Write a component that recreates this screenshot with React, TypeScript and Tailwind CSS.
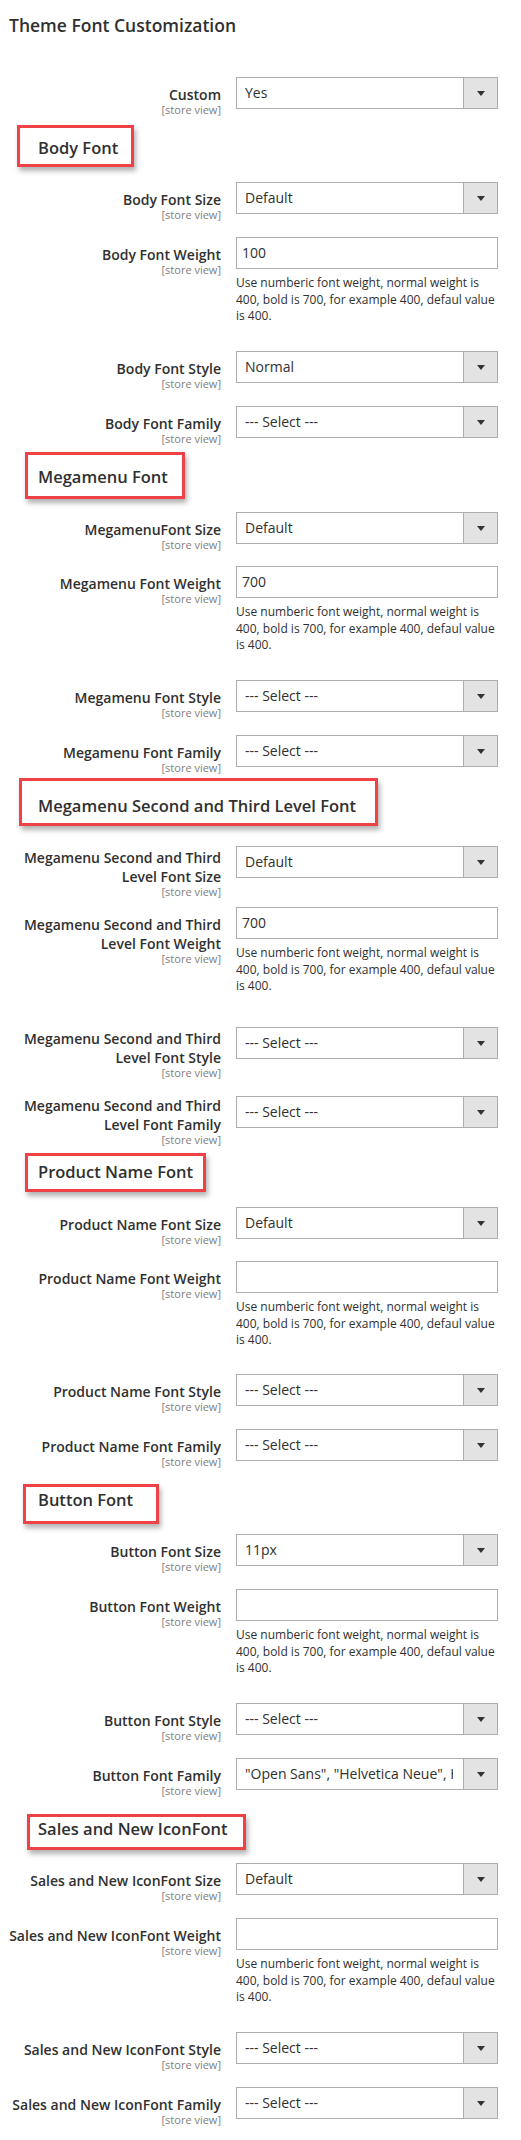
type Field = {
  label: string;
  kind: "select" | "input";
  value: string;
  row: string;
  pad: string;
};

type Section = {
  title: string;
  wrap: string;
  box: string;
  fields: Field[];
};

const SELECT = "--- Select ---";

const sections: Section[] = [
  {
    title: "Body Font",
    wrap: "h-[57px]",
    box: "ml-[17px] h-[42px] w-[117px] pl-[18px] pt-[9px]",
    fields: [
      { label: "Body Font Size", kind: "select", value: "Default", row: "h-[55px]", pad: "pt-[8px]" },
      { label: "Body Font Weight", kind: "input", value: "100", row: "h-[114px]", pad: "pt-[8px]" },
      { label: "Body Font Style", kind: "select", value: "Normal", row: "h-[55px]", pad: "pt-[8px]" },
      { label: "Body Font Family", kind: "select", value: SELECT, row: "h-[46px]", pad: "pt-[8px]" },
    ],
  },
  {
    title: "Megamenu Font",
    wrap: "h-[60px]",
    box: "ml-[25px] h-[47px] w-[160px] pl-[10px] pt-[11px]",
    fields: [
      { label: "MegamenuFont Size", kind: "select", value: "Default", row: "h-[54px]", pad: "pt-[8px]" },
      { label: "Megamenu Font Weight", kind: "input", value: "700", row: "h-[114px]", pad: "pt-[8px]" },
      { label: "Megamenu Font Style", kind: "select", value: SELECT, row: "h-[55px]", pad: "pt-[8px]" },
      { label: "Megamenu Font Family", kind: "select", value: SELECT, row: "h-[43px]", pad: "pt-[8px]" },
    ],
  },
  {
    title: "Megamenu Second and Third Level Font",
    wrap: "h-[68px]",
    box: "ml-[19px] h-[48px] w-[359px] pl-[16px] pt-[14px]",
    fields: [
      { label: "Megamenu Second and Third Level Font Size", kind: "select", value: "Default", row: "h-[61px]", pad: "pt-[2px]" },
      { label: "Megamenu Second and Third Level Font Weight", kind: "input", value: "700", row: "h-[120px]", pad: "pt-[8px]" },
      { label: "Megamenu Second and Third Level Font Style", kind: "select", value: SELECT, row: "h-[69px]", pad: "pt-[2px]" },
      { label: "Megamenu Second and Third Level Font Family", kind: "select", value: SELECT, row: "h-[57px]", pad: "pt-0" },
    ],
  },
  {
    title: "Product Name Font",
    wrap: "h-[54px]",
    box: "ml-[25px] h-[39px] w-[181px] pl-[10px] pt-[5px]",
    fields: [
      { label: "Product Name Font Size", kind: "select", value: "Default", row: "h-[54px]", pad: "pt-[8px]" },
      { label: "Product Name Font Weight", kind: "input", value: "", row: "h-[113px]", pad: "pt-[8px]" },
      { label: "Product Name Font Style", kind: "select", value: SELECT, row: "h-[55px]", pad: "pt-[8px]" },
      { label: "Product Name Font Family", kind: "select", value: SELECT, row: "h-[55px]", pad: "pt-[8px]" },
    ],
  },
  {
    title: "Button Font",
    wrap: "h-[50px]",
    box: "ml-[23px] h-[40px] w-[136px] pl-[12px] pt-[2px]",
    fields: [
      { label: "Button Font Size", kind: "select", value: "11px", row: "h-[55px]", pad: "pt-[8px]" },
      { label: "Button Font Weight", kind: "input", value: "", row: "h-[114px]", pad: "pt-[8px]" },
      { label: "Button Font Style", kind: "select", value: SELECT, row: "h-[55px]", pad: "pt-[8px]" },
      {
        label: "Button Font Family",
        kind: "select",
        value: '"Open Sans", "Helvetica Neue", Helvetica, Arial, sans-serif',
        row: "h-[56px]",
        pad: "pt-[8px]",
      },
    ],
  },
  {
    title: "Sales and New IconFont",
    wrap: "h-[49px]",
    box: "ml-[27px] h-[36px] w-[219px] pl-[8px] pt-[1px]",
    fields: [
      { label: "Sales and New IconFont Size", kind: "select", value: "Default", row: "h-[55px]", pad: "pt-[8px]" },
      { label: "Sales and New IconFont Weight", kind: "input", value: "", row: "h-[114px]", pad: "pt-[8px]" },
      { label: "Sales and New IconFont Style", kind: "select", value: SELECT, row: "h-[55px]", pad: "pt-[8px]" },
      { label: "Sales and New IconFont Family", kind: "select", value: SELECT, row: "h-[53px]", pad: "pt-[8px]" },
    ],
  },
];

function SelectBox({ value }: { value: string }) {
  return (
    <div className="flex h-[32px] w-[262px] border border-[#adadad] bg-white">
      <div className="ml-[8px] mr-[10px] min-w-0 flex-1 overflow-hidden whitespace-nowrap text-[14px] leading-[30px] text-[#303030]">
        {value}
      </div>
      <div className="flex w-[34px] shrink-0 items-center justify-center border-l border-[#adadad] bg-[#e3e3e3]">
        <svg width="8" height="5" viewBox="0 0 8 5" aria-hidden>
          <path d="M0 0h8L4 5z" fill="#333" />
        </svg>
      </div>
    </div>
  );
}

function WeightInput({ value }: { value: string }) {
  return (
    <div className="w-[262px]">
      <div className="h-[32px] border border-[#adadad] bg-white pl-[5px] text-[14px] leading-[30px] text-[#303030]">
        {value}
      </div>
      <p className="mt-[6px] text-[12px] leading-[16.5px] text-[#303030]">
        Use numberic font weight, normal weight is
        <br />
        400, bold is 700, for example 400, defaul value
        <br />
        is 400.
      </p>
    </div>
  );
}

function Row({ field }: { field: Field }) {
  return (
    <div className={`flex items-start ${field.row}`}>
      <div className={`w-[221px] shrink-0 pl-[6px] text-right ${field.pad}`}>
        <div className="text-[14px] font-semibold leading-[19px] text-[#303030]">{field.label}</div>
        <div className="text-[11px] leading-[11px] text-[#808080]">[store view]</div>
      </div>
      <div className="ml-[15px]">
        {field.kind === "select" ? <SelectBox value={field.value} /> : <WeightInput value={field.value} />}
      </div>
    </div>
  );
}

export default function App() {
  return (
    <div className="w-[521px] bg-white font-['Open_Sans','Liberation_Sans',sans-serif] text-[#303030]">
      <div className="h-[77px] pl-[9px] pt-[14px]">
        <h1 className="text-[17.5px] font-semibold leading-[22px] text-[#303030]">Theme Font Customization</h1>
      </div>

      <Row field={{ label: "Custom", kind: "select", value: "Yes", row: "h-[48px]", pad: "pt-[8px]" }} />

      {sections.map((section) => (
        <section key={section.title}>
          <div className={section.wrap}>
            <div
              className={`border-[3px] border-[#ef4247] bg-white shadow-[2px_4px_5px_rgba(0,0,0,0.3)] ${section.box}`}
            >
              <h2 className="whitespace-nowrap text-[16.5px] font-semibold leading-[22px] text-[#303030]">
                {section.title}
              </h2>
            </div>
          </div>
          {section.fields.map((field) => (
            <Row key={field.label} field={field} />
          ))}
        </section>
      ))}
    </div>
  );
}
